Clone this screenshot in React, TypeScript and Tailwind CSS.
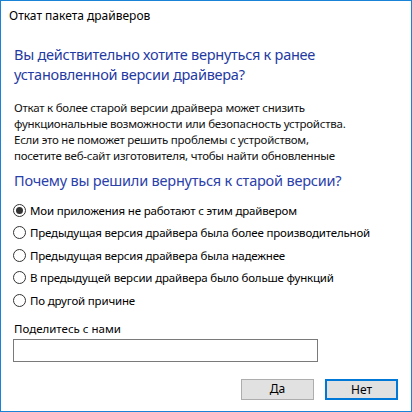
const reasons = [
  "Мои приложения не работают с этим драйвером",
  "Предыдущая версия драйвера была более производительной",
  "Предыдущая версия драйвера была надежнее",
  "В предыдущей версии драйвера было больше функций",
  "По другой причине",
];

function Radio({ checked }: { checked: boolean }) {
  return (
    <span className="flex h-[13px] w-[13px] shrink-0 items-center justify-center rounded-full border border-[#333333] bg-white">
      {checked && <span className="h-[7px] w-[7px] rounded-full bg-[#333333]" />}
    </span>
  );
}

export default function App() {
  return (
    <div
      className="flex h-[412px] w-[412px] flex-col border border-[#1883d7] bg-white text-[#000000]"
      style={{ fontFamily: '"Noto Sans", "Open Sans", sans-serif' }}
    >
      {/* Title bar */}
      <div className="h-[31px] pl-[8px] pt-[7px] text-[12px] leading-[16px]">Откат пакета драйверов</div>

      <div className="flex flex-1 flex-col px-[13px]">
        <h1 className="mt-[12px] text-[14.5px] leading-[20px] tracking-[-0.25px] text-[#1f3aa3]">
          Вы действительно хотите вернуться к ранее
          <br />
          установленной версии драйвера?
        </h1>

        <div className="mt-[16px] h-[66px] overflow-hidden text-[11.5px] leading-[16px] tracking-[-0.25px] text-[#111111]">
          Откат к более старой версии драйвера может снизить
          <br />
          функциональные возможности или безопасность устройства.
          <br />
          Если это не поможет решить проблемы с устройством,
          <br />
          посетите веб-сайт изготовителя, чтобы найти обновленные
          <br />
          драйверы.
        </div>

        <h2 className="mt-[4px] text-[14.5px] leading-[20px] tracking-[-0.2px] text-[#2a40ab]">
          Почему вы решили вернуться к старой версии?
        </h2>

        <div className="mt-[9px] flex flex-col">
          {reasons.map((r, i) => (
            <label key={r} className="-ml-px flex h-[22.5px] items-center gap-[4px] text-[11.5px] tracking-[-0.18px]">
              <Radio checked={i === 0} />
              <span>{r}</span>
            </label>
          ))}
        </div>

        <div className="mt-[9px] text-[11.5px] leading-[16px]">Поделитесь с нами</div>
        <div className="mt-[2px] -ml-px h-[23px] w-[305px] border border-[#7a7a7a] bg-white" />

        <div className="mt-[17px] flex justify-end gap-[11px]">
          <button className="h-[21px] w-[73px] border border-[#adadad] bg-[#e1e1e1] text-[12px]">Да</button>
          <button className="h-[21px] w-[73px] border-2 border-[#0078d7] bg-[#e1e1e1] text-[12px]">Нет</button>
        </div>
      </div>
    </div>
  );
}
